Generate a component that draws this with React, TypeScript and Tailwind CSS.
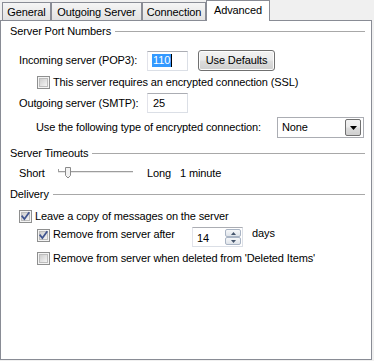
import React from "react";

function Check({ checked }: { checked?: boolean }) {
  return (
    <svg width="13" height="13" viewBox="0 0 13 13" className="shrink-0 block">
      <defs>
        <linearGradient id={checked ? "cbg1" : "cbg0"} x1="0" y1="0" x2="1" y2="1">
          <stop offset="0" stopColor="#cbcbcb" />
          <stop offset="1" stopColor="#f7f7f7" />
        </linearGradient>
      </defs>
      <rect x="0.5" y="0.5" width="12" height="12" fill="#f4f4f4" stroke="#8e8f8f" />
      <rect x="2.5" y="2.5" width="8" height="8" fill={`url(#${checked ? "cbg1" : "cbg0"})`} stroke="#bdbdbd" />
      {checked && (
        <path d="M3.2 6.3 L5.4 9 L9.8 3" stroke="#3f548f" strokeWidth="1.7" fill="none" strokeLinecap="square" />
      )}
    </svg>
  );
}

function Header({ title }: { title: string }) {
  return (
    <div className="flex items-center h-[14px] ml-[9px] mr-[6px]">
      <span className="whitespace-nowrap">{title}</span>
      <div className="flex-1 h-px bg-[#a8a8a8] ml-[4px]" />
    </div>
  );
}

const inputCls =
  "bg-white border border-[#dbdfe6] border-t-[#abadb3] border-l-[#e2e3ea] shrink-0";

export default function App() {
  const tabBase =
    "flex items-center justify-center border border-b-0 border-[#898c95] whitespace-nowrap";
  return (
    <div className="w-[374px] h-[361px] bg-[#f0f0f0] text-black text-[11px] leading-[13px] tracking-[-0.12px] font-['Liberation_Sans',Arial,sans-serif] overflow-hidden">
      {/* tabs */}
      <div className="flex items-end h-[20px] pl-[2px]">
        <div className={`${tabBase} w-[49px] h-[18px] pt-[1px] bg-gradient-to-b from-[#f5f5f5] to-[#e2e2e2]`}>General</div>
        <div className={`${tabBase} w-[91px] h-[18px] pt-[1px] bg-gradient-to-b from-[#f5f5f5] to-[#e2e2e2]`}>Outgoing Server</div>
        <div className={`${tabBase} w-[64px] h-[18px] pt-[1px] bg-gradient-to-b from-[#f5f5f5] to-[#e2e2e2]`}>Connection</div>
        <div className={`${tabBase} relative z-10 w-[64px] h-[21px] -mb-px bg-white pb-[2px]`}>Advanced</div>
      </div>
      {/* panel */}
      <div className="w-[372px] h-[340px] bg-white border border-[#898c95] flex flex-col">
        <div className="mt-[3px]">
          <Header title="Server Port Numbers" />
        </div>
        {/* incoming */}
        <div className="flex items-center h-[21px] mt-[12px]">
          <span className="ml-[18px] w-[128px] shrink-0">Incoming server (POP3):</span>
          <div className={`${inputCls} w-[41px] h-[20px] flex items-center pl-[4px]`}>
            <span className="bg-[#3399ff] text-white px-[1px] leading-[13px]">110</span>
            <span className="w-px h-[13px] bg-black" />
          </div>
          <div className="ml-[10px] w-[77px] h-[21px] rounded-[3px] border border-[#707070] flex items-center justify-center bg-[linear-gradient(#f2f2f2_0%,#ebebeb_48%,#dddddd_52%,#cfcfcf_100%)] shadow-[inset_0_0_0_1px_#fcfcfc]">
            Use Defaults
          </div>
        </div>
        {/* ssl */}
        <div className="flex items-center h-[14px] mt-[4px]">
          <div className="ml-[36px]">
            <Check />
          </div>
          <span className="ml-[3px] whitespace-nowrap">This server requires an encrypted connection (SSL)</span>
        </div>
        {/* outgoing */}
        <div className="flex items-center h-[20px] mt-[4px]">
          <span className="ml-[18px] w-[128px] shrink-0">Outgoing server (SMTP):</span>
          <div className={`${inputCls} w-[41px] h-[20px] flex items-center pl-[5px]`}>25</div>
        </div>
        {/* encryption type */}
        <div className="flex items-center h-[21px] mt-[4px]">
          <span className="ml-[35px] w-[241px] shrink-0 whitespace-nowrap">Use the following type of encrypted connection:</span>
          <div className="w-[87px] h-[21px] bg-white border border-[#abadb3] flex items-center pl-[4px] pr-[2px] shrink-0">
            <span className="flex-1">None</span>
            <div className="w-[16px] h-[17px] rounded-[2px] border border-[#707070] bg-[linear-gradient(#f2f2f2_0%,#ebebeb_48%,#dddddd_52%,#cfcfcf_100%)] flex items-center justify-center">
              <svg width="7" height="4" viewBox="0 0 7 4">
                <path d="M0 0 H7 L3.5 4 Z" fill="#000" />
              </svg>
            </div>
          </div>
        </div>
        <div className="mt-[8px]">
          <Header title="Server Timeouts" />
        </div>
        {/* slider */}
        <div className="flex items-center h-[14px] mt-[6px]">
          <span className="ml-[18px] w-[39px] shrink-0">Short</span>
          <svg width="76" height="14" viewBox="0 0 76 14" className="shrink-0">
            <line x1="0" y1="5.5" x2="75" y2="5.5" stroke="#9d9d9d" />
            <line x1="0" y1="6.5" x2="75" y2="6.5" stroke="#e6e6e6" />
            <line x1="0.5" y1="3" x2="0.5" y2="5" stroke="#9d9d9d" />
            <path d="M7.5 1.5 H12.5 V9.5 L10 12 L7.5 9.5 Z" fill="#f2f2f2" stroke="#8a8a8a" />
          </svg>
          <span className="ml-[13px] w-[33px] shrink-0">Long</span>
          <span className="whitespace-nowrap">1 minute</span>
        </div>
        <div className="mt-[7px]">
          <Header title="Delivery" />
        </div>
        {/* leave copy */}
        <div className="flex items-center h-[14px] mt-[8px]">
          <div className="ml-[18px]">
            <Check checked />
          </div>
          <span className="ml-[3px] whitespace-nowrap">Leave a copy of messages on the server</span>
        </div>
        {/* remove after */}
        <div className="flex items-start h-[20px] mt-[4px]">
          <div className="ml-[36px] mt-[2px]">
            <Check checked />
          </div>
          <span className="ml-[3px] mt-[1px] w-[139px] shrink-0 whitespace-nowrap">Remove from server after</span>
          <div className={`${inputCls} w-[51px] h-[20px] flex items-stretch`}>
            <span className="flex-1 pl-[4px] pt-[4px]">14</span>
            <div className="w-[16px] flex flex-col my-[1px] mr-[1px]">
              <div className="flex-1 border border-[#a9b4c4] rounded-[2px] bg-gradient-to-b from-[#f6f7f9] to-[#dfe4ea] flex items-center justify-center">
                <svg width="5" height="3" viewBox="0 0 5 3">
                  <path d="M0 3 H5 L2.5 0 Z" fill="#44546b" />
                </svg>
              </div>
              <div className="flex-1 border border-[#a9b4c4] rounded-[2px] bg-gradient-to-b from-[#f6f7f9] to-[#dfe4ea] flex items-center justify-center">
                <svg width="5" height="3" viewBox="0 0 5 3">
                  <path d="M0 0 H5 L2.5 3 Z" fill="#44546b" />
                </svg>
              </div>
            </div>
          </div>
          <span className="ml-[9px] mt-[0px]">days</span>
        </div>
        {/* remove when deleted */}
        <div className="flex items-center h-[14px] mt-[4px]">
          <div className="ml-[36px]">
            <Check />
          </div>
          <span className="ml-[3px] whitespace-nowrap">Remove from server when deleted from 'Deleted Items'</span>
        </div>
      </div>
    </div>
  );
}
